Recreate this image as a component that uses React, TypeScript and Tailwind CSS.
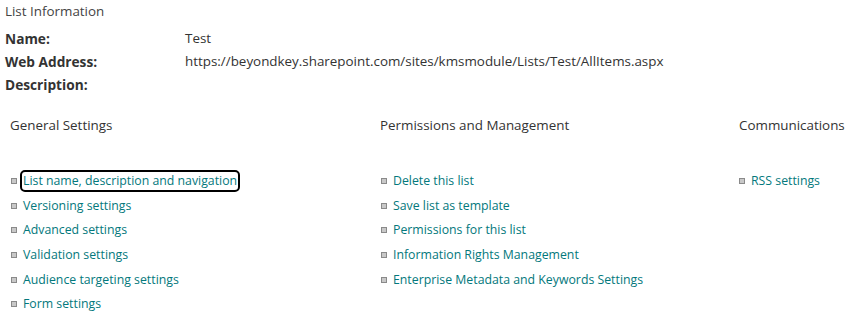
import React from "react";

const general = [
  "List name, description and navigation",
  "Versioning settings",
  "Advanced settings",
  "Validation settings",
  "Audience targeting settings",
  "Form settings",
];
const perms = [
  "Delete this list",
  "Save list as template",
  "Permissions for this list",
  "Information Rights Management",
  "Enterprise Metadata and Keywords Settings",
];
const comms = ["RSS settings"];

function Bullet() {
  return <span className="inline-block w-[6px] h-[6px] border border-[#8a8a8a] bg-[#c8c8c8] shrink-0" />;
}

function LinkList({ items, focusFirst }: { items: string[]; focusFirst?: boolean }) {
  return (
    <ul className="flex flex-col">
      {items.map((t, i) => (
        <li key={t} className="flex items-center h-[24.6px] gap-[6px]">
          <Bullet />
          <a
            href="#"
            className={
              "text-[#03787c] text-[12.3px] leading-[18px] " +
              (focusFirst && i === 0 ? "outline-2 outline-[#000] rounded-[3px] -ml-[1px] pl-[1px] pr-[1px]" : "")
            }
          >
            {t}
          </a>
        </li>
      ))}
    </ul>
  );
}

export default function App() {
  return (
    <div
      className="w-[849px] h-[322px] bg-white text-[#333333] text-[13.4px] overflow-hidden"
      style={{ fontFamily: '"Segoe UI", "Open Sans", "Noto Sans", sans-serif' }}
    >
      <div className="pl-[5px] pt-[2px]">
        <div className="h-[19px] leading-[19px] text-[#444]">List Information</div>
        <div className="mt-[6px] grid grid-cols-[180px_1fr]">
          <div className="h-[23px] leading-[23px] font-bold text-[13.7px]">Name:</div>
          <div className="h-[23px] leading-[23px]">Test</div>
          <div className="h-[23px] leading-[23px] font-bold text-[13.7px]">Web Address:</div>
          <div className="h-[23px] leading-[23px]">https://beyondkey.sharepoint.com/sites/kmsmodule/Lists/Test/AllItems.aspx</div>
          <div className="h-[23px] leading-[23px] font-bold text-[13.7px]">Description:</div>
          <div className="h-[23px] leading-[23px]"></div>
        </div>
      </div>
      <div className="mt-[19px] pl-[10px] grid grid-cols-[370px_359px_1fr]">
        <div>
          <div className="h-[20px] leading-[20px] text-[13.4px]">General Settings</div>
          <div className="mt-[34px] pl-[1px]">
            <LinkList items={general} focusFirst />
          </div>
        </div>
        <div>
          <div className="h-[20px] leading-[20px] text-[13.4px]">Permissions and Management</div>
          <div className="mt-[34px] pl-[1px]">
            <LinkList items={perms} />
          </div>
        </div>
        <div>
          <div className="h-[20px] leading-[20px] text-[13.4px]">Communications</div>
          <div className="mt-[34px]">
            <LinkList items={comms} />
          </div>
        </div>
      </div>
    </div>
  );
}
